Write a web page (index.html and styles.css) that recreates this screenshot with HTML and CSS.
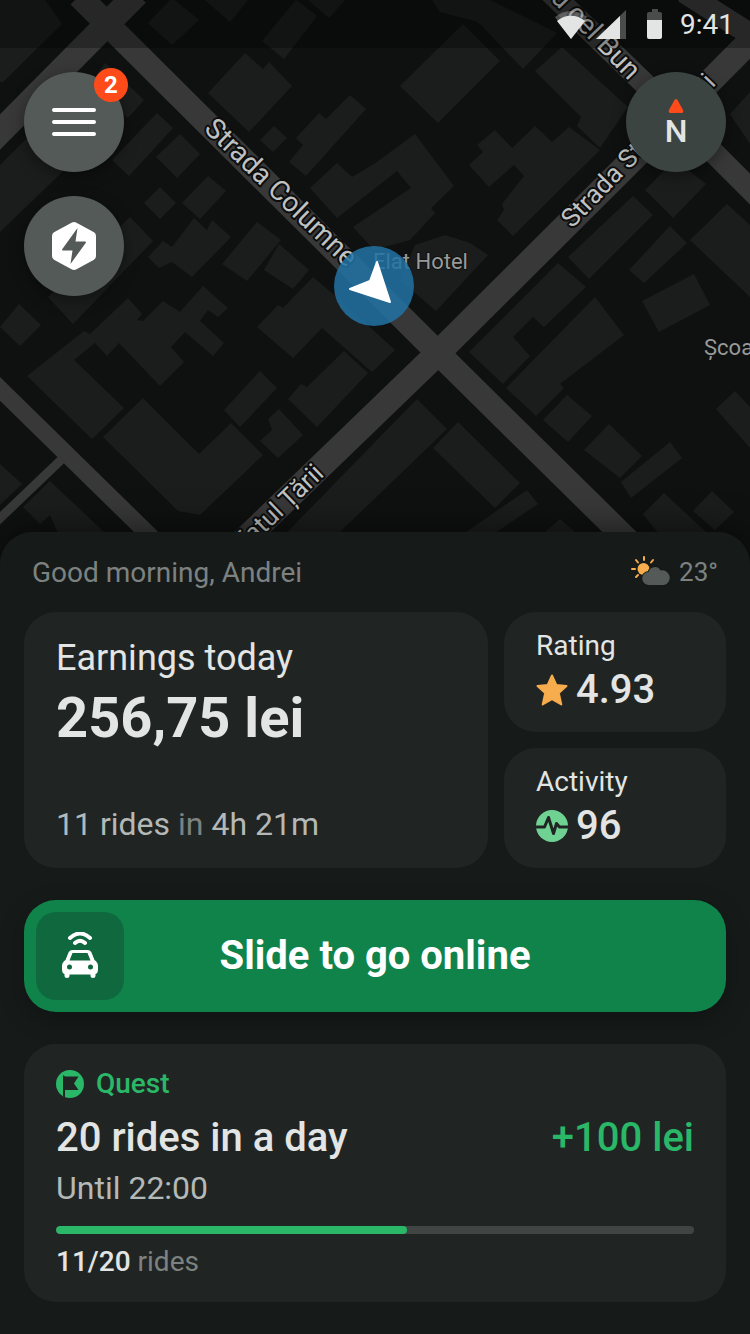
FILE: index.html
```html
<!DOCTYPE html>
<html lang="en">
<head>
    <meta charset="UTF-8">
    <meta name="viewport" content="width=device-width, initial-scale=1.0">
    <title>Driver Home</title>
    <link rel="stylesheet" href="styles.css">
</head>
<body>

    <main class="app">
        <section class="map">
            <svg class="map-canvas" viewBox="0 0 750 572" aria-hidden="true">
                <!-- Buildings -->
                <g class="buildings">
                    <path d="M0 0H45L62 24L3 82H0Z"/>
                    <path d="M172 -2L199 20L172 45L148 23Z"/>
                    <path d="M205 0H248L230 22Z"/>
                    <path d="M296 0L317 16L284 59L262 41Z"/>
                    <path d="M308 0H345L329 18Z"/>
                    <path d="M245 53L263 69L269 62L292 86L249 132L208 93Z"/>
                    <path d="M350 95L366 109L306 176L289 162L303 145L296 138L319 113L326 119Z"/>
                    <path d="M274 126L287 138L273 152L260 140Z"/>
                    <path d="M337 163L352 177L374 164L415 134L454 186L431 208L435 213L410 240L374 250L353 227L411 188L397 171L337 218L310 188Z"/>
                    <path d="M157 113L173 128L129 176L112 160Z"/>
                    <path d="M180 134L200 154L177 178L156 157Z"/>
                    <path d="M208 176L226 191L200 219L182 203Z"/>
                    <path d="M160 187L176 203L160 219L144 203Z"/>
                    <path d="M105 63L144 100L128 118L90 85Z"/>
                    <path d="M0 165L45 120L80 155L0 232Z"/>
                    <path d="M130 217L153 241L73 324L48 297Z"/>
                    <path d="M194 218L207 230L212 220L231 237L192 277L172 262L159 268L148 257L163 241L172 247Z"/>
                    <path d="M257 222L281 240L247 281L222 264Z"/>
                    <path d="M279 244L309 270L293 289L264 270Z"/>
                    <path d="M19 304L41 325L20 346L0 327Z"/>
                    <path d="M128 298L142 314L137 320L143 321L163 301L180 312L203 286L228 308L218 317L208 310L200 321L224 343L213 356L185 332L171 347L184 362L160 386L119 343L107 356L95 343L74 360L124 408L92 439L27 376L84 331L90 334Z"/>
                    <path d="M143 398L199 454L231 423L263 455L200 515L178 511L103 437Z"/>
                    <path d="M260 371L277 388L240 427L224 410Z"/>
                    <path d="M279 409L303 435L278 458L260 441L272 430L268 419Z"/>
                    <path d="M313 277L340 300L395 350L372 372L322 328L293 358L257 327L278 305L283 308Z"/>
                    <path d="M344 351L368 373L317 427L288 399L301 384L307 387Z"/>
                    <path d="M0 464L22 484L0 505Z"/>
                    <path d="M50 481L104 532V560H70L50 515L40 524L23 507Z"/>
                    <path d="M463 24L500 61L438 123L400 86Z"/>
                    <path d="M432 0H490L557 33L523 69L478 22L440 12Z"/>
                    <path d="M562 47L628 107L600 148L577 126L581 117L535 71Z"/>
                    <path d="M495 130L512 148L535 126L552 142L569 127L600 150L513 236L497 220L504 210L502 204L524 176L514 165L489 187L469 165L483 152L477 145Z"/>
                    <path d="M633 196L653 215L589 279L568 257Z"/>
                    <path d="M645 190L675 160L706 184L673 218Z"/>
                    <path d="M670 226L687 243L644 283L629 270Z"/>
                    <path d="M727 204L750 225V297L690 240Z"/>
                    <path d="M730 114L750 92V144Z"/>
                    <path d="M445 235L470 243L488 255L436 311L400 280L415 245Z"/>
                    <path d="M558 263L586 287L544 327L533 317L513 337L530 356L503 384L469 352Z"/>
                    <path d="M595 297L624 335L560 384L564 388L536 416L506 388Z"/>
                    <path d="M694 274L710 305L659 332L642 301Z"/>
                    <path d="M735 391L750 407V448L716 409Z"/>
                    <path d="M567 395L592 416L568 442L543 420Z"/>
                    <path d="M609 424L642 456L620 478L584 450Z"/>
                    <path d="M670 442L682 458L631 498L621 482Z"/>
                    <path d="M664 493L720 545L680 560L643 514Z"/>
                    <path d="M712 491L734 512L715 530L693 511Z"/>
                    <path d="M458 422L520 483L495 508L433 448Z"/>
                    <path d="M417 399L447 429L340 532V560H260Z"/>
                    <path d="M527 490L538 504L470 550L440 550Z"/>
                    <path d="M560 519L590 545L530 545Z"/>
                </g>

                <!-- Streets -->
                <g class="streets">
                    <path stroke-width="24" d="M79 -4L438 353L660 572"/>
                    <path stroke-width="25" d="M137 -6L107 24L-12 144"/>
                    <path stroke-width="25" d="M210 573L438 353L640 152L756 35"/>
                    <path stroke-width="22" d="M550 -8L645 84L760 199"/>
                    <path stroke-width="22" d="M684 -8L756 38"/>
                    <path stroke-width="17" d="M-10 379L190 575"/>
                    <path stroke-width="9" d="M62 459L-6 524"/>
                </g>

                <!-- Street names -->
                <g class="street-names">
                    <text class="major" transform="translate(203 130) rotate(44)">Strada Columne</text>
                    <text class="major" transform="translate(629 81) rotate(46)" text-anchor="end">u cel Bun</text>
                    <text transform="translate(572 229) rotate(-46)">Strada St</text>
                    <text transform="translate(717 84) rotate(-46)" text-anchor="end">ii</text>
                    <text transform="translate(325 475) rotate(-44)" text-anchor="end">Sfatul Țării</text>
                </g>
                <g class="places">
                    <text x="373" y="269">Elat Hotel</text>
                    <text x="704" y="355">Școa</text>
                </g>

                <!-- Driver position -->
                <g class="driver">
                    <circle cx="374" cy="286" r="40"/>
                    <path d="M377 262L390 302L350 289L370 281Z"/>
                </g>
            </svg>

            <div class="map-overlay">
                <header class="status-bar">
                    <svg class="status-icons" width="112" height="32" viewBox="0 0 112 32" aria-hidden="true">
                        <path opacity="0.3" d="M3 9C13 1 25 1 35 9L19 31Z"/>
                        <path d="M5 13C13 6 25 6 33 13L19 31Z"/>
                        <path opacity="0.3" d="M74 2V31H44Z"/>
                        <path d="M68 8V31H44Z"/>
                        <path opacity="0.3" d="M100 1H106V4H108Q110 4 110 6V12H95V6Q95 4 97 4H100Z"/>
                        <path d="M95 12H110V29Q110 31 108 31H97Q95 31 95 29Z"/>
                    </svg>
                    <span class="clock">9:41</span>
                </header>

                <div class="map-controls">
                    <div class="control-group">
                        <button class="round-button" type="button" aria-label="Menu">
                            <svg width="44" height="28" viewBox="0 0 44 28" aria-hidden="true">
                                <path class="menu-lines" d="M2 2H42M2 14H42M2 26H42"/>
                            </svg>
                            <span class="badge">2</span>
                        </button>
                        <button class="round-button" type="button" aria-label="Boost">
                            <svg width="44" height="48" viewBox="0 0 44 48" aria-hidden="true">
                                <path fill="#fff" fill-rule="evenodd" d="M19.500 0.700Q22 -0.600 24.500 0.700L42 10.300Q44 11.400 44 14V34Q44 36.600 42 37.700L24.500 47.300Q22 48.600 19.500 47.300L2 37.700Q0 36.600 0 34V14Q0 11.400 2 10.300ZM25.500 6L10 27.500Q10 28.500 11 28.500H20.500L18.500 42L34 20.500Q34 19.500 33 19.500H23.500Z"/>
                            </svg>
                        </button>
                    </div>
                    <button class="round-button compass" type="button" aria-label="Point map north">
                        <svg width="16" height="14" viewBox="0 0 16 14" aria-hidden="true">
                            <path fill="#ff4a19" d="M6.500 1Q8 -1 9.500 1L15 11Q16 14 13.500 14H2.500Q0 14 1 11Z"/>
                        </svg>
                        <span>N</span>
                    </button>
                </div>
            </div>
        </section>

        <section class="sheet">
            <div class="greeting">
                <span>Good morning, Andrei</span>
                <span class="weather">
                    <svg width="40" height="32" viewBox="0 0 40 32" aria-hidden="true">
                        <path class="sun-rays" d="M13 1V4M5 4L7 6.500M22 4L20 6.500M1 13H4M5 21L7 19"/>
                        <circle cx="12.500" cy="13" r="6" fill="#f7ac4d"/>
                        <path class="cloud" d="M18 29A6.500 6.500 0 0 1 17.500 16A6.500 6.500 0 0 1 29.500 14.500A7.200 7.200 0 0 1 33 29Z"/>
                    </svg>
                    23°
                </span>
            </div>

            <div class="stats">
                <article class="card earnings">
                    <h2 class="earnings-title">Earnings today</h2>
                    <div class="earnings-amount">256,75 lei</div>
                    <div class="earnings-rides">11 rides <span>in</span> 4h 21m</div>
                </article>
                <article class="card stat">
                    <h2 class="stat-title">Rating</h2>
                    <div class="stat-value">
                        <svg width="32" height="32" viewBox="0 0 32 32" aria-hidden="true">
                            <path class="star" d="M16 1.500L20.300 11L30.500 12L22.800 19L25.300 30.500L16 25.200L6.700 30.500L9.200 19L1.500 12L11.700 11Z"/>
                        </svg>
                        4.93
                    </div>
                </article>
                <article class="card stat">
                    <h2 class="stat-title">Activity</h2>
                    <div class="stat-value">
                        <svg width="32" height="32" viewBox="0 0 32 32" aria-hidden="true">
                            <circle cx="16" cy="16" r="16" fill="#70d292"/>
                            <path class="pulse" d="M0 17H8.500L12.500 7.500L17.500 23.500L20.500 13.500L23.500 17H32"/>
                        </svg>
                        96
                    </div>
                </article>
            </div>

            <button class="go-online" type="button">
                <span class="knob">
                    <svg width="36" height="48" viewBox="0 0 36 48" aria-hidden="true">
                        <path class="signal" d="M8 6Q18 -3 28 6M13 11Q18 6.500 23 11"/>
                        <path fill="#fff" fill-rule="evenodd" d="M10 18H26Q28.500 18 29.500 20.500L32.500 28Q36 30.500 36 34V38Q36 41 33.500 42V44Q33.500 46 31 46Q28.500 46 28.500 44V42.500H7.500V44Q7.500 46 5 46Q2.500 46 2.500 44V42Q0 41 0 38V34Q0 30.500 3.500 28L6.500 20.500Q7.500 18 10 18ZM10.500 21L7.500 28.500H28.500L25.500 21ZM7.500 32.500A2.500 2.500 0 1 0 7.500 37.500A2.500 2.500 0 1 0 7.500 32.500ZM28.500 32.500A2.500 2.500 0 1 0 28.500 37.500A2.500 2.500 0 1 0 28.500 32.500Z"/>
                    </svg>
                </span>
                <span class="go-online-label">Slide to go online</span>
            </button>

            <article class="card quest">
                <div class="quest-tag">
                    <svg width="28" height="28" viewBox="0 0 28 28" aria-hidden="true">
                        <circle cx="14" cy="14" r="14" fill="#2ab768"/>
                        <path fill="#202524" d="M7 5L9 6.500H22.500L18 13.500L22.500 20H9V28L7 26Z"/>
                    </svg>
                    Quest
                </div>
                <div class="quest-title">
                    <h2>20 rides in a day</h2>
                    <strong>+100 lei</strong>
                </div>
                <div class="quest-until">Until 22:00</div>
                <progress class="quest-progress" value="11" max="20" aria-label="Quest progress"></progress>
                <div class="quest-count"><b>11/20</b> rides</div>
            </article>
        </section>
    </main>

</body>
</html>
```
FILE: styles.css
```css
* {
    box-sizing: border-box;
}

body {
    margin: 0;
    background-color: #161b1a;
    font-family: Roboto, "Liberation Sans", sans-serif;
    color: #e2e5e4;
}

h2 {
    margin: 0;
    font-weight: 400;
}

button {
    border: none;
    padding: 0;
    font-family: inherit;
    color: inherit;
    cursor: pointer;
}

svg {
    display: block;
    flex-shrink: 0;
}

/* Map */
.map {
    display: grid;
    background-color: #0f1110;
    overflow: hidden;
}

.map-canvas,
.map-overlay {
    grid-area: 1 / 1;
}

.map-canvas {
    width: 100%;
    height: auto;
}

.buildings {
    fill: #1b1d1c;
}

.streets {
    fill: none;
    stroke: #383838;
}

.street-names {
    font-size: 26px;
    fill: #c0c2c1;
    stroke: #0c0d0d;
    stroke-width: 4px;
    stroke-linejoin: round;
    paint-order: stroke;
}

.street-names .major {
    font-size: 28px;
}

.places {
    font-size: 22px;
    fill: #989a99;
    stroke: #0f1110;
    stroke-width: 2px;
    paint-order: stroke;
}

.driver circle {
    fill: #2173a4;
    fill-opacity: 0.85;
}

.driver path {
    fill: #fff;
    stroke: #fff;
    stroke-width: 2px;
    stroke-linejoin: round;
}

.status-bar {
    display: flex;
    justify-content: flex-end;
    align-items: center;
    gap: 16px;
    height: 48px;
    padding: 0 16px;
    background-color: rgba(0, 0, 0, 0.3);
}

.status-icons {
    fill: #e2e5e4;
}

.clock {
    font-size: 28px;
}

.map-controls {
    display: flex;
    justify-content: space-between;
    align-items: flex-start;
    padding: 24px;
}

.control-group {
    display: flex;
    flex-direction: column;
    gap: 24px;
}

.round-button {
    position: relative;
    display: flex;
    flex-direction: column;
    justify-content: center;
    align-items: center;
    width: 100px;
    height: 100px;
    border-radius: 50%;
    background-color: #545a58;
    box-shadow: 0 4px 16px rgba(0, 0, 0, 0.4);
}

.menu-lines {
    fill: none;
    stroke: #fff;
    stroke-width: 4px;
    stroke-linecap: round;
}

.badge {
    position: absolute;
    top: -4px;
    right: -4px;
    width: 34px;
    height: 34px;
    border-radius: 50%;
    background-color: #ff4a19;
    color: #fff;
    font-size: 24px;
    font-weight: 700;
    line-height: 34px;
    text-align: center;
}

.compass {
    padding-top: 4px;
    background-color: #3c4442;
    font-size: 32px;
    font-weight: 500;
    line-height: 36px;
}

/* Bottom sheet */
.sheet {
    position: relative;
    margin-top: -40px;
    padding: 0 24px 32px;
    border-radius: 32px 32px 0 0;
    background-color: #161b1a;
    box-shadow: 0 -4px 32px rgba(0, 0, 0, 0.5);
}

.greeting {
    display: flex;
    justify-content: space-between;
    align-items: center;
    height: 80px;
    padding: 0 8px;
    font-size: 28px;
    color: #7d8281;
}

.weather {
    display: flex;
    align-items: center;
    gap: 8px;
    font-size: 26px;
}

.sun-rays {
    fill: none;
    stroke: #f7ac4d;
    stroke-width: 2px;
    stroke-linecap: round;
}

.cloud {
    fill: #545a58;
    stroke: #161b1a;
    stroke-width: 2px;
    paint-order: stroke;
}

.card {
    border-radius: 32px;
    background-color: #202524;
}

.stats {
    display: grid;
    grid-template-columns: 1fr 222px;
    gap: 16px;
}

.earnings {
    display: flex;
    flex-direction: column;
    grid-row: span 2;
    padding: 24px 32px;
}

.earnings-title {
    font-size: 36px;
    line-height: 44px;
}

.earnings-amount {
    margin-top: 4px;
    font-size: 56px;
    font-weight: 700;
    line-height: 68px;
}

.earnings-rides {
    margin-top: auto;
    font-size: 32px;
    line-height: 40px;
    color: #b4b8b7;
}

.earnings-rides span {
    color: #7d8281;
}

.stat {
    padding: 16px 32px;
}

.stat-title {
    font-size: 28px;
    line-height: 36px;
}

.stat-value {
    display: flex;
    align-items: center;
    gap: 8px;
    font-size: 40px;
    font-weight: 500;
    line-height: 52px;
}

.star {
    fill: #f7ac4d;
    stroke: #f7ac4d;
    stroke-width: 2px;
    stroke-linejoin: round;
}

.pulse {
    fill: none;
    stroke: #202524;
    stroke-width: 3px;
    stroke-linejoin: round;
}

.go-online {
    display: grid;
    align-items: center;
    width: 100%;
    margin: 32px 0;
    padding: 12px;
    border-radius: 32px;
    background-color: #10834b;
    box-shadow: 0 8px 24px rgba(0, 0, 0, 0.3);
    color: #fff;
}

.knob,
.go-online-label {
    grid-area: 1 / 1;
}

.knob {
    display: flex;
    justify-content: center;
    align-items: center;
    width: 88px;
    height: 88px;
    border-radius: 20px;
    background-color: #10683f;
}

.signal {
    fill: none;
    stroke: #fff;
    stroke-width: 4px;
    stroke-linecap: round;
}

.go-online-label {
    font-size: 40px;
    font-weight: 700;
    line-height: 52px;
    text-align: center;
}

.quest {
    padding: 24px 32px;
}

.quest-tag {
    display: flex;
    align-items: center;
    gap: 12px;
    font-size: 28px;
    font-weight: 500;
    line-height: 32px;
    color: #2ab768;
}

.quest-title {
    display: flex;
    justify-content: space-between;
    margin-top: 12px;
    font-size: 40px;
    line-height: 52px;
}

.quest-title h2,
.quest-title strong {
    font-size: inherit;
    font-weight: 500;
}

.quest-title strong {
    color: #2ab768;
}

.quest-until {
    margin-top: 4px;
    font-size: 32px;
    line-height: 40px;
    color: #b4b8b7;
}

.quest-progress {
    display: block;
    appearance: none;
    width: 100%;
    height: 8px;
    margin: 18px 0 12px;
    border: none;
    border-radius: 4px;
    background-color: #404443;
    overflow: hidden;
}

.quest-progress::-webkit-progress-bar {
    background-color: #404443;
}

.quest-progress::-webkit-progress-value {
    border-radius: 4px;
    background-color: #2ab768;
}

.quest-progress::-moz-progress-bar {
    background-color: #2ab768;
}

.quest-count {
    font-size: 28px;
    line-height: 32px;
    color: #7d8281;
}

.quest-count b {
    font-weight: 500;
    color: #e2e5e4;
}
```
